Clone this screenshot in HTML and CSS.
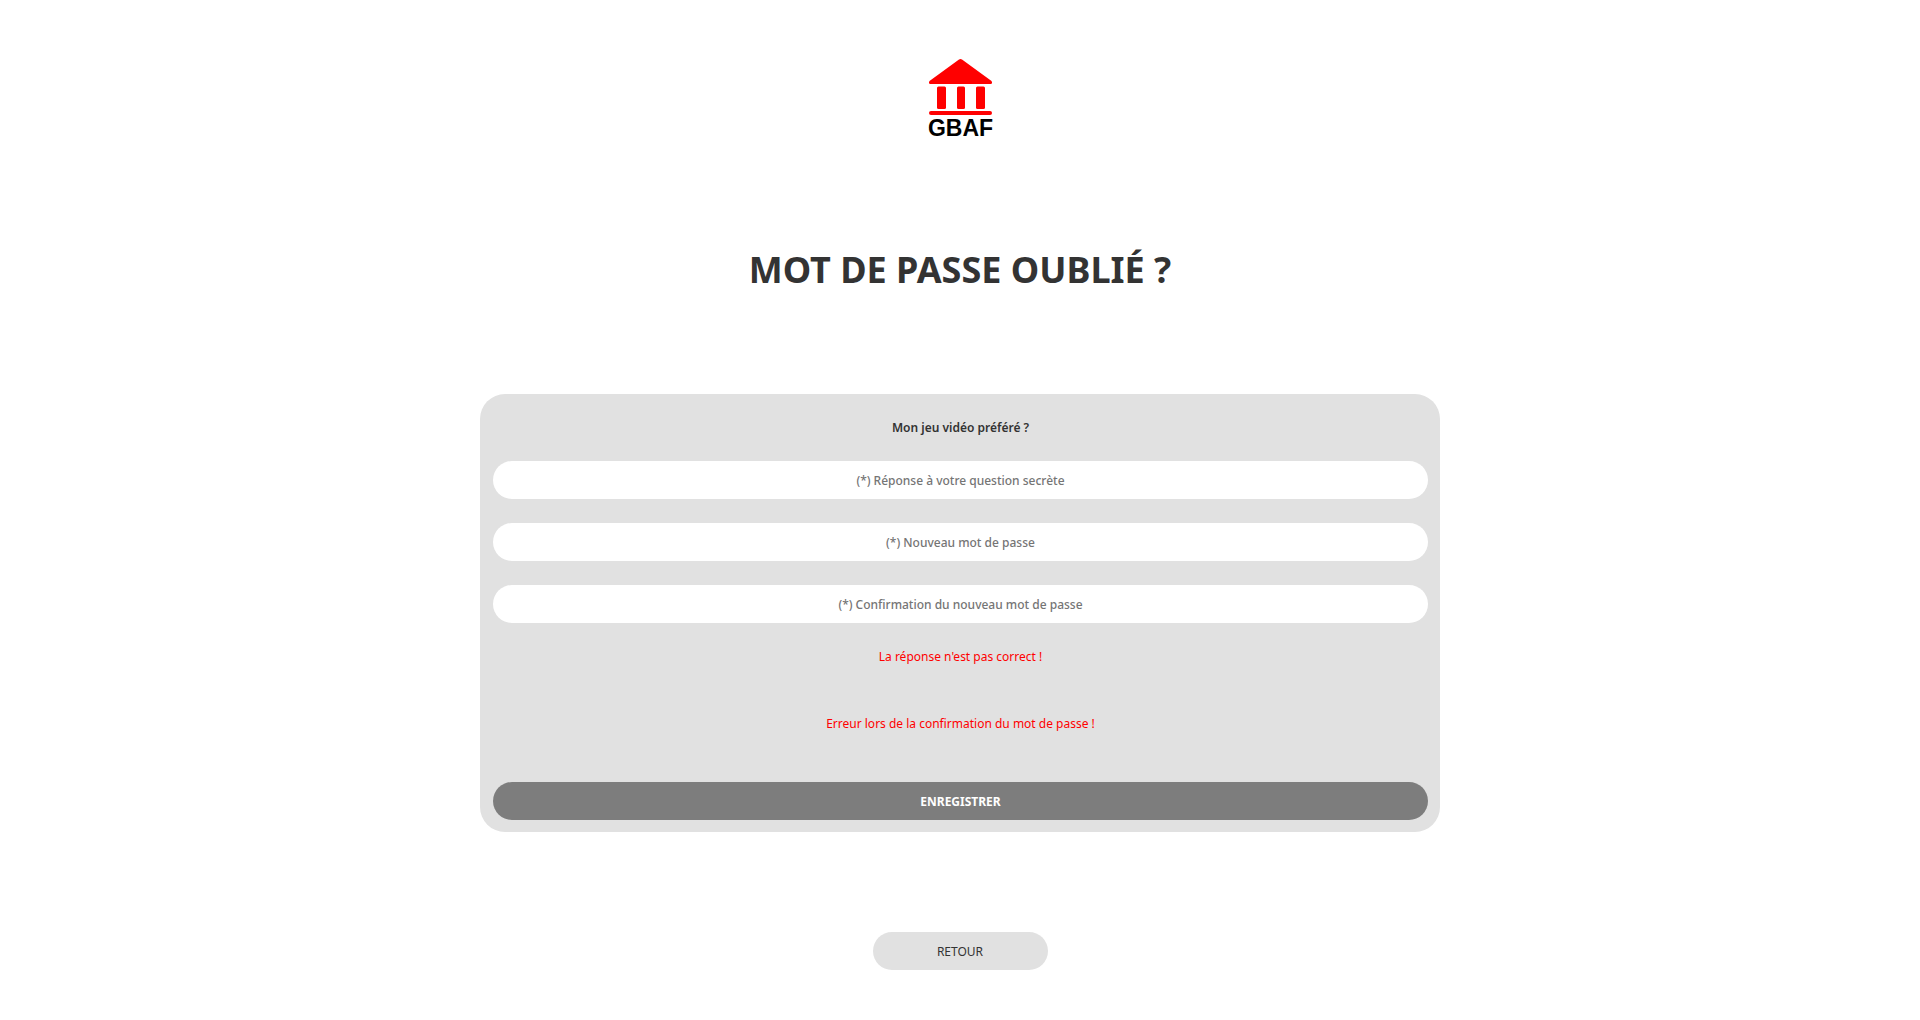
FILE: index.html
```
<!DOCTYPE html>
<html lang="fr">
<head>
  <meta charset="utf-8">
  <meta name="viewport" content="width=device-width, initial-scale=1">
  <title>GBAF - Mot de passe oublié</title>
  <link rel="stylesheet" href="styles.css">
</head>
<body>
  <header class="header">
    <svg class="logo" viewBox="0 0 100 100" role="img" aria-label="GBAF">
      <g fill="#f00">
        <path d="M49 14.5Q50.500 13.400 52 14.500L81.500 36Q83 39 80.500 39H20.500Q18 39 19.500 36Z"/>
        <rect x="27" y="41.500" width="9" height="22.500" rx="1.500"/>
        <rect x="47" y="41.500" width="8" height="22.500" rx="1.500"/>
        <rect x="66" y="41.500" width="9" height="22.500" rx="1.500"/>
        <rect x="19" y="66" width="63" height="4" rx="2"/>
      </g>
      <text class="logo-text" x="50.500" y="91" text-anchor="middle">GBAF</text>
    </svg>
  </header>
  <main class="main">
    <h1 class="title">MOT DE PASSE OUBLIÉ ?</h1>
    <form class="form">
      <label class="question" for="reponse">Mon jeu vidéo préféré ?</label>
      <div class="fields">
        <input class="field" id="reponse" type="text" placeholder="(*) Réponse à votre question secrète">
        <input class="field" type="password" aria-label="Nouveau mot de passe" placeholder="(*) Nouveau mot de passe">
        <input class="field" type="password" aria-label="Confirmation du nouveau mot de passe" placeholder="(*) Confirmation du nouveau mot de passe">
      </div>
      <p class="error">La réponse n'est pas correct !</p>
      <p class="error">Erreur lors de la confirmation du mot de passe !</p>
      <button class="submit" type="submit">ENREGISTRER</button>
    </form>
    <a class="back" href="#">RETOUR</a>
  </main>
</body>
</html>
```
FILE: styles.css
```
* {
  box-sizing: border-box;
}

body {
  margin: 0;
  background: #fff;
  color: #333;
  font-family: "Noto Sans", sans-serif;
  font-size: 12px;
  line-height: 17px;
}

.header {
  display: flex;
  justify-content: center;
  padding-top: 45px;
}

.logo {
  width: 100px;
  height: 100px;
}

.logo-text {
  font: bold 23px "Liberation Sans", sans-serif;
  fill: #000;
}

.main {
  display: flex;
  flex-direction: column;
  align-items: center;
  padding: 100px 0 50px;
}

.title {
  margin: 0 0 100px;
  font-size: 36px;
  font-weight: 700;
  line-height: 49px;
}

.form {
  display: flex;
  flex-direction: column;
  width: 50%;
  padding: 25px 12px 12px 13px;
  border-radius: 25px;
  background: #e1e1e1;
  text-align: center;
}

.question {
  margin-bottom: 25px;
  font-weight: 600;
}

.fields {
  display: flex;
  flex-direction: column;
  gap: 24px;
  margin-bottom: 25px;
}

.field,
.submit,
.back {
  height: 38px;
  padding: 0 12px;
  border: 0;
  border-radius: 19px;
  font: inherit;
  text-align: center;
}

.field {
  background: #fff;
  color: #333;
  font-weight: 500;
}

.field::placeholder {
  color: #757575;
}

.error {
  margin: 0 0 50px;
  color: #f00;
}

.submit {
  background: #7d7d7d;
  color: #fff;
  font-weight: 700;
  cursor: pointer;
}

.back {
  width: 175px;
  margin-top: 100px;
  background: #e1e1e1;
  color: #333;
  line-height: 39px;
  text-decoration: none;
}
```
